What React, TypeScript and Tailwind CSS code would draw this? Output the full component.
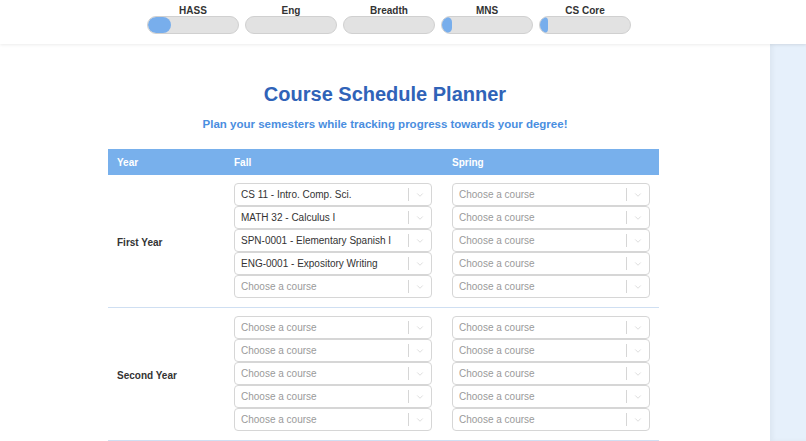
import { ChevronDown } from "lucide-react";

const progress = [
  { label: "HASS", pct: 25 },
  { label: "Eng", pct: 0 },
  { label: "Breadth", pct: 0 },
  { label: "MNS", pct: 11 },
  { label: "CS Core", pct: 9 },
];

const years = [
  {
    name: "First Year",
    fall: ["CS 11 - Intro. Comp. Sci.", "MATH 32 - Calculus I", "SPN-0001 - Elementary Spanish I", "ENG-0001 - Expository Writing", ""],
    spring: ["", "", "", "", ""],
  },
  {
    name: "Second Year",
    fall: ["", "", "", "", ""],
    spring: ["", "", "", "", ""],
  },
];

function CourseSelect({ value }: { value: string }) {
  return (
    <div className="h-[23px] w-[198px] flex items-center rounded-[4px] border border-[#d6d6d6] bg-white">
      <span className={`flex-1 truncate pl-[6px] text-[10px] ${value ? "text-[#333]" : "text-[#9a9a9a]"}`}>
        {value || "Choose a course"}
      </span>
      <span className="h-[13px] w-px bg-[#d6d6d6]" />
      <span className="w-[22px] flex items-center justify-center text-[#c8c8c8]">
        <ChevronDown size={10} strokeWidth={1.5} />
      </span>
    </div>
  );
}

export default function App() {
  return (
    <div className="h-screen flex flex-col overflow-hidden bg-white" style={{ fontFamily: '"Liberation Sans", Arial, sans-serif' }}>
      <header className="h-[44px] shrink-0 flex pl-[147px] gap-[6px] bg-white shadow-[0_1px_3px_rgba(0,0,0,0.08)] relative z-10">
        {progress.map((p) => (
          <div key={p.label} className="w-[92px] flex flex-col items-center">
            <span className="mt-[5px] h-[11px] leading-[11px] text-[10px] font-bold text-[#333]">{p.label}</span>
            <div className="h-[18px] w-full rounded-full bg-[#e2e2e2] border border-[#d0d0d0] overflow-hidden">
              {p.pct > 0 && (
                <div className="h-full rounded-full bg-[#78aeec]" style={{ width: `${p.pct}%` }} />
              )}
            </div>
          </div>
        ))}
      </header>

      <div className="flex flex-1 min-h-0">
        <main className="w-[770px] shrink-0 bg-white">
          <h1 className="pt-[37px] text-center text-[20px] leading-[26px] font-bold text-[#3063b8]">
            Course Schedule Planner
          </h1>
          <p className="mt-[9px] text-center text-[11.5px] leading-[16px] font-bold text-[#4a8ee0]">
            Plan your semesters while tracking progress towards your degree!
          </p>

          <div className="ml-[108px] mt-[17px] w-[551px]">
            <div className="h-[26px] flex items-center bg-[#78b0ec] text-[10px] font-bold text-white">
              <span className="w-[126px] pl-[9px]">Year</span>
              <span className="w-[218px]">Fall</span>
              <span>Spring</span>
            </div>

            {years.map((y) => (
              <div key={y.name} className="flex items-center pt-[8px] pb-[9px] border-b border-[#cfdff2]">
                <span className="w-[126px] pl-[9px] pt-[3px] text-[10px] font-bold text-[#333]">{y.name}</span>
                <div className="w-[218px] flex flex-col">
                  {y.fall.map((c, i) => (
                    <CourseSelect key={i} value={c} />
                  ))}
                </div>
                <div className="flex flex-col">
                  {y.spring.map((c, i) => (
                    <CourseSelect key={i} value={c} />
                  ))}
                </div>
              </div>
            ))}
          </div>
        </main>
        <aside className="flex-1 bg-[#e6f0fb] shadow-[inset_3px_0_4px_rgba(0,0,0,0.04)]" />
      </div>
    </div>
  );
}
